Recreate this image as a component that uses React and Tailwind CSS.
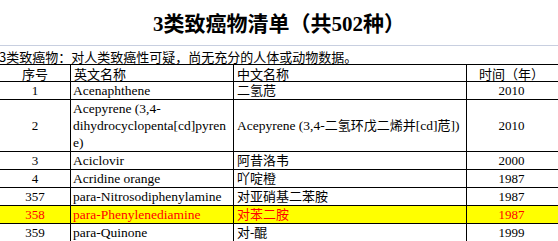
import React from "react";

const rows = [
  { no: "1", en: ["Acenaphthene"], zh: [["c", "二氢苊"]], year: "2010" },
  {
    no: "2",
    en: ["Acepyrene (3,4-", "dihydrocyclopenta[cd]pyren", "e)"],
    zh: [
      ["l", "Acepyrene (3,4-"],
      ["c", "二氢环戊二烯并"],
      ["l", "[cd]"],
      ["c", "苊"],
      ["l", "])"],
    ],
    year: "2010",
    h: "h-[52px]",
  },
  { no: "3", en: ["Aciclovir"], zh: [["c", "阿昔洛韦"]], year: "2000" },
  { no: "4", en: ["Acridine orange"], zh: [["c", "吖啶橙"]], year: "1987" },
  { no: "357", en: ["para-Nitrosodiphenylamine"], zh: [["c", "对亚硝基二苯胺"]], year: "1987" },
  { no: "358", en: ["para-Phenylenediamine"], zh: [["c", "对苯二胺"]], year: "1987", hi: true },
  { no: "359", en: ["para-Quinone"], zh: [["c", "对-醌"]], year: "1999" },
];

const Row = ({ r }) => (
  <div
    className={`grid grid-cols-[71px_163px_233px_1fr] border-b border-black ${r.h || "h-[18px]"} ${
      r.hi ? "bg-[#ffff00] text-[#ff0000]" : "text-black"
    } text-[13.5px] leading-[17px]`}
  >
    <div className="border-r border-black flex items-center justify-center text-[13px]">{r.no}</div>
    <div className="border-r border-black flex flex-col justify-center pl-[2px] whitespace-nowrap overflow-hidden">
      {r.en.map((l) => (
        <span key={l}>{l}</span>
      ))}
    </div>
    <div className="border-r border-black flex items-center pl-[3px] whitespace-nowrap overflow-hidden">
      <span>
        {r.zh.map(([k, t], i) =>
          k === "c" ? (
            <span key={i} className="text-[13px]">
              {t}
            </span>
          ) : (
            <span key={i}>{t}</span>
          )
        )}
      </span>
    </div>
    <div className="flex items-center justify-center text-[13px] pr-[2px]">{r.year}</div>
  </div>
);

const App = () => {
  return (
    <div className="w-[558px] h-[241px] overflow-hidden bg-white text-black font-['Liberation_Serif','Noto_Sans_CJK_SC',serif]">
      <div className="h-[46px] border-b border-[#c8cfe0] flex items-center justify-center pt-[4px]">
        <h1 className="text-[21px] font-bold leading-none">3类致癌物清单（共502种）</h1>
      </div>
      <div className="h-[18px] flex items-end -ml-[1px] whitespace-nowrap font-['Noto_Sans_CJK_SC',sans-serif]">
        <span className="text-[13px] leading-[15px]">3类致癌物：对人类致癌性可疑，尚无充分的人体或动物数据。</span>
      </div>
      <div className="border-t border-black">
        <div className="grid grid-cols-[71px_163px_233px_1fr] border-b border-black h-[17px] text-[13px] leading-[15px] font-['Noto_Sans_CJK_SC',sans-serif]">
          <div className="border-r border-black flex items-center justify-center">序号</div>
          <div className="border-r border-black flex items-center pl-[3px]">英文名称</div>
          <div className="border-r border-black flex items-center pl-[3px]">中文名称</div>
          <div className="flex items-center justify-center pr-[2px]">时间（年）</div>
        </div>
        {rows.map((r) => (
          <Row key={r.no} r={r} />
        ))}
      </div>
    </div>
  );
};

export default App;
